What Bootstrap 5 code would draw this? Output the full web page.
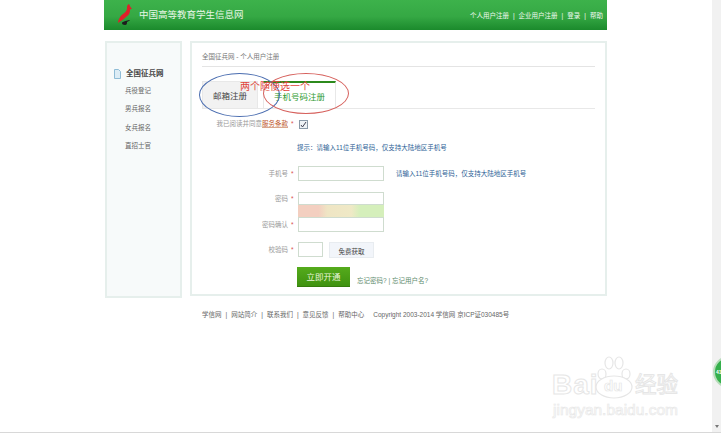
<!DOCTYPE html>
<html lang="zh">
<head>
  <meta charset="UTF-8">
  <title>个人用户注册</title>
  <link href="https://cdn.jsdelivr.net/npm/bootstrap@5.3.0/dist/css/bootstrap.min.css" rel="stylesheet">
  <style>
    html, body { height: 100%; overflow: hidden; }
    body { font-family: "Liberation Sans", "Noto Sans CJK SC", sans-serif; font-size: 6.500px; color: #777; background: #fff; position: relative; }
    .page-wrap { width: 503px; margin-left: 104px; }
    .top-bar { height: 30px; background: linear-gradient(#3db24b, #35a844 55%, #1b8a2c); padding: 0 4px 0 13px; }
    .logo-text { font-size: 9.500px; color: #e8f6e8; margin-left: 6px; }
    .top-links { font-size: 6.500px; color: #eef8ee; padding-top: 2px; }
    .top-links i { font-style: normal; margin: 0 4px; }
    .content-row { margin-top: 11px; gap: 8px; }
    .side-box { width: 77px; height: 257px; margin-left: 1px; border: 2px solid #e6efec; background: #f7fafa; padding-top: 24px; }
    .side-title { font-size: 7.500px; font-weight: bold; color: #444; height: 14px; }
    .side-title svg { margin: 0 5px 0 7px; }
    .side-list { margin-top: 1px; }
    .side-item { font-size: 6.500px; color: #666; height: 18.300px; line-height: 18px; padding-left: 18px; }
    .main-box { width: 417px; height: 255px; border: 2px solid #e6efec; background: #fff; padding: 7px 10px 0 10px; }
    .crumb { font-size: 6.500px; color: #777; height: 17px; line-height: 13px; border-bottom: 1px solid #e4e4e4; }
    .tab-row { height: 42px; border-bottom: 1px solid #e8e8e8; padding-top: 14px; }
    .reg-tab { height: 27px; font-size: 8.500px; line-height: 29px; text-align: center; }
    .tab-mail { width: 56px; background: #f2f2f2; color: #444; border: 1px solid #e8e8e8; border-bottom: 0; }
    .tab-phone { width: 73px; margin-left: 5px; background: #fff; color: #2f9a32; border-top: 2px solid #2c8a1c; border-left: 1px solid #e8e8e8; border-right: 1px solid #e8e8e8; line-height: 28px; }
    .terms-line { height: 16px; line-height: 16px; margin-top: 7px; }
    .lbl { width: 86px; text-align: right; color: #999; flex: none; white-space: nowrap; }
    .star { color: #d9534f; margin: 0 4px 0 3px; width: 3px; flex: none; }
    .terms { color: #c0582a; border-bottom: 1px solid #d9a68c; }
    .tick { width: 9px; height: 9px; border: 1px solid #8a9aa8; background: #eef2f5; margin-left: 1px; }
    .tip { color: #2d5f96; }
    .tip-line { margin: 9px 0 0 95px; height: 14px; line-height: 14px; }
    .phone-row { margin-top: 11px; }
    .phone-tip { margin-left: 12px; }
    .pw-row { margin-top: 11px; }
    .code-row { margin-top: 10px; }
    .txt-field { width: 86px; height: 15px; border: 1px solid #cfdccf; background: #fff; }
    .pw-field { height: 13px; }
    .pw-strength { width: 86px; height: 12px; margin-left: 96px; background: linear-gradient(90deg, #f3cfc0 0, #f3cfc0 24%, #efe5c4 34%, #efe9c6 62%, #d5efbb 72%, #d5efbb 100%); }
    .code-field { width: 25px; }
    .free-btn { width: 45px; height: 16px; background: #f2f5fa; border: 1px solid #e8ecf0; color: #444; line-height: 17px; text-align: center; margin-left: 6px; }
    .action-row { margin: 9px 0 0 95px; }
    .open-btn { width: 53px; height: 20px; background: linear-gradient(#55ab1c, #3f9210); color: #e9f5dc; font-size: 8.500px; line-height: 20px; text-align: center; border-bottom: 1px solid #347c0c; }
    .forgot { color: #5d8a6c; margin-left: 7px; padding-top: 9px; }
    .foot-line { margin: 12px 0 0 98px; color: #666; white-space: nowrap; }
    .foot-line i { font-style: normal; margin: 0 4px; }
    .foot-line b { font-weight: normal; margin-left: 9px; }
    .mark-ring { position: absolute; border-radius: 50%; border: 1px solid; }
    .ring-blue { left: 199px; top: 73px; width: 81px; height: 44px; border-color: #4a6db0; }
    .ring-red { left: 263px; top: 73px; width: 86px; height: 41px; border-color: #d6605c; }
    .mark-note { position: absolute; left: 240px; top: 81px; font-size: 10px; line-height: 12px; color: #e0453b; white-space: nowrap; }
    .scroll-side { position: absolute; right: 0; top: 0; width: 9px; height: 432px; background: #f1f1f1; }
    .scroll-arrow { position: absolute; right: 2px; top: 425px; border: 2px solid transparent; border-top: 3px solid #777; }
    .float-badge { position: absolute; left: 713px; top: 356px; width: 32px; height: 32px; border-radius: 50%; background: #35b04c; border: 2px solid #b6dcb9; color: #fff; font-size: 5px; font-weight: bold; line-height: 28px; padding-left: 1px; }
    .bottom-line { position: absolute; left: 0; right: 0; top: 432px; height: 1px; background: #d8d8d8; }
    .wm { position: absolute; white-space: nowrap; color: #fff; }
    .wm-bai { left: 552px; top: 371px; font-size: 28px; line-height: 28px; font-weight: bold; letter-spacing: 1px; -webkit-text-stroke: 1px #e6e6e6; }
    .wm-paw { left: 594px; top: 356px; width: 40px; height: 43px; }
    .wm-du { left: 604px; top: 378px; font-size: 15px; line-height: 16px; font-weight: bold; -webkit-text-stroke: .7px #e6e6e6; }
    .wm-cn { left: 635px; top: 373px; font-size: 21.500px; line-height: 24px; -webkit-text-stroke: 1px #e6e6e6; }
    .wm-url { left: 553px; top: 402px; font-size: 15.500px; line-height: 16px; -webkit-text-stroke: .7px #e8e8e8; }
  </style>
</head>
<body>
  <div class="page-wrap">
    <div class="top-bar d-flex align-items-center justify-content-between">
      <div class="d-flex align-items-center">
        <svg width="16" height="24" viewBox="0 0 16 24">
          <path d="M12 1c-2 1-2 2-2 4s-1 4-4 6c-3 2-5 6-5 9 2-2 5-3 8-6 3-2 4-4 4-7 0-1 1-1 2-1-1-1-2-3-3-5z" fill="#e0202a"/>
          <path d="M6 19c2-1 5-2 7-2 0 1-2 1-3 2 0 1 0 3-2 3s-3-1-3-2c0 0 0-1 1-1z" fill="#1d1d1d"/>
        </svg>
        <span class="logo-text">中国高等教育学生信息网</span>
      </div>
      <div class="top-links">个人用户注册<i>|</i>企业用户注册<i>|</i>登录<i>|</i>帮助</div>
    </div>

    <div class="content-row d-flex">
      <div class="side-box">
        <div class="side-title d-flex align-items-center">
          <svg width="7" height="10" viewBox="0 0 7 10"><path d="M.5.5h4l2 2v7h-6z" fill="#dcecf5" stroke="#8fbcd6"/></svg>
          全国征兵网
        </div>
        <div class="side-list">
          <div class="side-item">兵役登记</div>
          <div class="side-item">男兵报名</div>
          <div class="side-item">女兵报名</div>
          <div class="side-item">直招士官</div>
        </div>
      </div>

      <div class="main-box">
        <div class="crumb">全国征兵网 - 个人用户注册</div>
        <div class="tab-row d-flex">
          <div class="reg-tab tab-mail">邮箱注册</div>
          <div class="reg-tab tab-phone">手机号码注册</div>
        </div>
        <div class="terms-line d-flex">
          <div class="lbl">我已阅读并同意<span class="terms">服务条款</span></div>
          <span class="star">*</span>
          <div class="tick d-flex align-items-center justify-content-center align-self-center">
            <svg width="7" height="7" viewBox="0 0 7 7"><path d="M1 4l1.500 2L6 1" fill="none" stroke="#445"/></svg>
          </div>
        </div>
        <div class="tip tip-line">提示：请输入11位手机号码，仅支持大陆地区手机号</div>
        <div class="phone-row d-flex align-items-center">
          <div class="lbl">手机号</div><span class="star">*</span>
          <div class="txt-field"></div>
          <div class="tip phone-tip">请输入11位手机号码，仅支持大陆地区手机号</div>
        </div>
        <div class="pw-row d-flex align-items-center">
          <div class="lbl">密码</div><span class="star">*</span>
          <div class="txt-field pw-field"></div>
        </div>
        <div class="pw-strength"></div>
        <div class="d-flex align-items-center">
          <div class="lbl">密码确认</div><span class="star">*</span>
          <div class="txt-field"></div>
        </div>
        <div class="code-row d-flex align-items-start">
          <div class="lbl align-self-center">校验码</div><span class="star align-self-center">*</span>
          <div class="txt-field code-field"></div>
          <div class="free-btn">免费获取</div>
        </div>
        <div class="action-row d-flex">
          <div class="open-btn">立即开通</div>
          <div class="forgot">忘记密码? | 忘记用户名?</div>
        </div>
      </div>
    </div>

    <div class="foot-line">学信网<i>|</i>网站简介<i>|</i>联系我们<i>|</i>意见反馈<i>|</i>帮助中心<b>Copyright 2003-2014 学信网 京ICP证030485号</b></div>
  </div>

  <!-- annotations drawn over the screenshot -->
  <div class="mark-ring ring-blue"></div>
  <div class="mark-ring ring-red"></div>
  <div class="mark-note">两个随便选一个</div>

  <div class="scroll-side"></div>
  <div class="scroll-arrow"></div>
  <div class="float-badge">41</div>
  <div class="bottom-line"></div>

  <div class="wm wm-bai">Bai</div>
  <svg class="wm wm-paw" viewBox="0 0 40 43" fill="#fff" stroke="#e6e6e6" stroke-width="1.200">
    <ellipse cx="8" cy="18" rx="4" ry="5"/><ellipse cx="15" cy="7" rx="4" ry="6"/>
    <ellipse cx="25" cy="7" rx="4" ry="6"/><ellipse cx="32" cy="18" rx="4" ry="5"/>
    <ellipse cx="20" cy="31" rx="18" ry="11"/>
  </svg>
  <div class="wm wm-du">du</div>
  <div class="wm wm-cn">经验</div>
  <div class="wm wm-url">jingyan.baidu.com</div>

  <script src="https://cdn.jsdelivr.net/npm/bootstrap@5.3.0/dist/js/bootstrap.bundle.min.js"></script>
</body>
</html>
